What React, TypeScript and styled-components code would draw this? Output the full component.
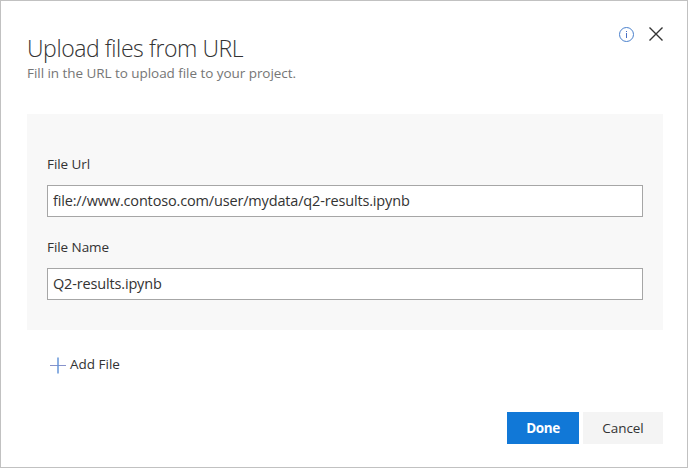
import React, { useState } from "react";
import styled, { createGlobalStyle } from "styled-components";

const GlobalStyle = createGlobalStyle`
  *, *::before, *::after { box-sizing: border-box; }
  body {
    margin: 0;
    background: #fff;
    color: #333;
    font-family: "Segoe UI", "Open Sans", "Noto Sans", sans-serif;
    font-size: 13.5px;
  }
  button, input { font-family: inherit; margin: 0; }
`;

const Dialog = styled.main`
  display: flex;
  flex-direction: column;
  width: 688px;
  height: 468px;
  padding: 26px 24px 23px 26px;
  border: 1px solid #c1c1c1;
  background: #fff;
`;

const Header = styled.header`
  display: flex;
  justify-content: space-between;
  height: 87px;
`;

const Title = styled.h1`
  margin: 5px 0 0;
  font-size: 23px;
  line-height: 32px;
  font-weight: 300;
  letter-spacing: -0.42px;
  color: #333;
  white-space: nowrap;
`;

const Subtitle = styled.p`
  margin: -1px 0 0;
  font-size: 13.5px;
  line-height: 20px;
  letter-spacing: -0.05px;
  color: #767676;
  white-space: nowrap;
`;

const HeaderActions = styled.div`
  display: flex;
  align-items: flex-start;
  gap: 14px;
`;

const IconButton = styled.button`
  display: flex;
  padding: 0;
  border: 0;
  background: none;
  color: #333;
`;

const Panel = styled.section`
  display: flex;
  flex-direction: column;
  gap: 20px;
  height: 216px;
  padding: 40px 20px 0;
  background: #f8f8f8;
`;

const Field = styled.label`
  display: flex;
  flex-direction: column;
  gap: 11px;
`;

const FieldLabel = styled.span`
  height: 20px;
  font-size: 13.5px;
  line-height: 20px;
  letter-spacing: -0.06px;
`;

const TextInput = styled.input`
  width: 100%;
  height: 32px;
  padding: 0 5px 1px;
  border: 1px solid #a6a6a6;
  border-radius: 0;
  outline: 0;
  background: #fff;
  color: #333;
  font-size: 14.5px;
  letter-spacing: -0.16px;
`;

const AddButton = styled.button`
  display: flex;
  align-items: center;
  align-self: flex-start;
  gap: 4px;
  height: 20px;
  margin: 25px 0 0 23px;
  padding: 0;
  border: 0;
  background: none;
  color: #333;
  font-size: 13.5px;
  line-height: 18px;
`;

const AddLabel = styled.span`
  padding-bottom: 2px;
`;

const Footer = styled.footer`
  display: flex;
  justify-content: flex-end;
  gap: 4px;
  margin-top: auto;
`;

const ActionButton = styled.button<{ $primary?: boolean }>`
  width: ${(p) => (p.$primary ? 72 : 80)}px;
  height: 32px;
  padding: 0;
  border: 0;
  background: ${(p) => (p.$primary ? "#1178d7" : "#f4f4f4")};
  color: ${(p) => (p.$primary ? "#fff" : "#333")};
  font-size: 13.5px;
  font-weight: ${(p) => (p.$primary ? 700 : 400)};
  letter-spacing: ${(p) => (p.$primary ? -0.4 : -0.05)}px;
`;

const InfoIcon = () => (
  <svg width="16" height="15" viewBox="0 0 16 15" fill="none">
    <circle cx="7.5" cy="7.5" r="7" stroke="#4a80cc" />
    <path d="M7.5 6v5M7.5 4v1" stroke="#4a70c4" />
  </svg>
);

const CloseIcon = () => (
  <svg width="14" height="14" viewBox="0 0 14 14" fill="none">
    <path d="M.5.5l13 13M13.5.5l-13 13" stroke="#333" strokeWidth="1.4" />
  </svg>
);

const PlusIcon = () => (
  <svg width="16" height="18" viewBox="0 0 16 18" fill="none">
    <path d="M0 9.5h16" stroke="#8792cb" />
    <path d="M8 1.5v16" stroke="#6494d8" strokeWidth="1.5" />
  </svg>
);

export default function App() {
  const [url, setUrl] = useState("file://www.contoso.com/user/mydata/q2-results.ipynb");
  const [name, setName] = useState("Q2-results.ipynb");
  return (
    <>
      <GlobalStyle />
      <Dialog>
        <Header>
          <div>
            <Title>Upload files from URL</Title>
            <Subtitle>Fill in the URL to upload file to your project.</Subtitle>
          </div>
          <HeaderActions>
            <IconButton aria-label="Information"><InfoIcon /></IconButton>
            <IconButton aria-label="Close"><CloseIcon /></IconButton>
          </HeaderActions>
        </Header>
        <Panel>
          <Field>
            <FieldLabel>File Url</FieldLabel>
            <TextInput value={url} spellCheck={false} onChange={(e) => setUrl(e.target.value)} />
          </Field>
          <Field>
            <FieldLabel>File Name</FieldLabel>
            <TextInput value={name} spellCheck={false} onChange={(e) => setName(e.target.value)} />
          </Field>
        </Panel>
        <AddButton><PlusIcon /><AddLabel>Add File</AddLabel></AddButton>
        <Footer>
          <ActionButton $primary>Done</ActionButton>
          <ActionButton>Cancel</ActionButton>
        </Footer>
      </Dialog>
    </>
  );
}
